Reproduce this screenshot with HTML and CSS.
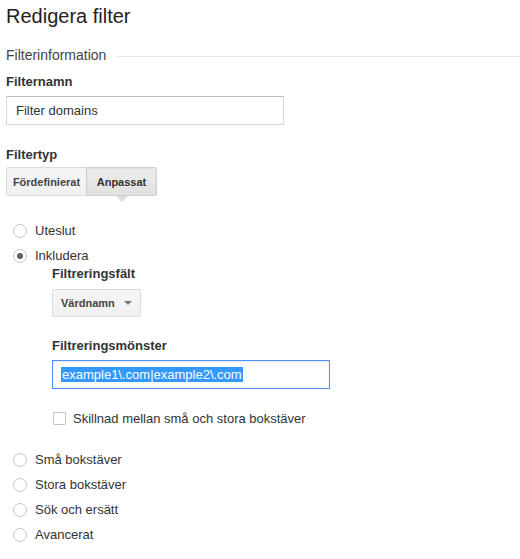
FILE: index.html
```html
<!DOCTYPE html>
<html lang="sv">
<head>
<meta charset="utf-8">
<title>Redigera filter</title>
<link rel="stylesheet" href="styles.css">
</head>
<body>
<div class="page">
  <h1 class="title">Redigera filter</h1>

  <div class="section-head">
    <span class="section-name">Filterinformation</span>
    <span class="rule"></span>
  </div>

  <div class="label label-name">Filternamn</div>
  <div class="textbox name-box">Filter domains</div>

  <div class="label label-type">Filtertyp</div>
  <div class="seg">
    <span class="seg-btn seg-first">Fördefinierat</span>
    <span class="seg-btn seg-on">Anpassat</span>
  </div>

  <div class="radios top-radios">
    <div class="radio-row"><span class="radio"></span><span class="radio-text">Uteslut</span></div>
    <div class="radio-row"><span class="radio checked"></span><span class="radio-text">Inkludera</span></div>
  </div>

  <div class="sub">
    <div class="label label-field">Filtreringsfält</div>
    <div class="dropdown"><span class="dd-text">Värdnamn</span><span class="dd-arrow"></span></div>

    <div class="label label-pattern">Filtreringsmönster</div>
    <div class="textbox pattern-box"><span class="sel">example1\.com|example2\.com</span></div>

    <div class="check-row"><span class="checkbox"></span><span class="check-text">Skillnad mellan små och stora bokstäver</span></div>
  </div>

  <div class="radios bottom-radios">
    <div class="radio-row"><span class="radio"></span><span class="radio-text">Små bokstäver</span></div>
    <div class="radio-row"><span class="radio"></span><span class="radio-text">Stora bokstäver</span></div>
    <div class="radio-row"><span class="radio"></span><span class="radio-text">Sök och ersätt</span></div>
    <div class="radio-row"><span class="radio"></span><span class="radio-text">Avancerat</span></div>
  </div>
</div>
</body>
</html>
```

FILE: styles.css
```css
* { box-sizing: border-box; }

html, body {
  margin: 0;
  padding: 0;
  background: #fff;
}

body {
  font-family: Arial, "Liberation Sans", sans-serif;
  color: #333;
  font-size: 13px;
}

.page {
  padding: 4px 0 0 6px;
}

.title {
  margin: 0;
  font-size: 20px;
  line-height: 24px;
  font-weight: normal;
  color: #222;
}

.section-head {
  display: flex;
  align-items: center;
  margin-top: 18px;
  height: 18px;
}

.section-name {
  font-size: 14px;
  line-height: 18px;
  color: #444;
}

.rule {
  flex: 1;
  height: 1px;
  background: #e5e5e5;
  margin-left: 11px;
  margin-top: 2px;
}

.label {
  font-weight: bold;
  font-size: 13px;
  line-height: 16px;
  color: #333;
}

.label-name { margin-top: 10px; }

.textbox {
  border: 1px solid #d9d9d9;
  border-top-color: #c0c0c0;
  background: #fff;
  font-size: 13px;
  color: #333;
  display: flex;
  align-items: center;
}

.name-box {
  margin-top: 6px;
  width: 278px;
  height: 29px;
  padding-left: 9px;
}

.label-type { margin-top: 22px; }

.seg {
  margin-top: 4px;
  display: flex;
  height: 29px;
}

.seg-btn {
  position: relative;
  display: flex;
  align-items: center;
  justify-content: center;
  height: 29px;
  border: 1px solid #dcdcdc;
  background: linear-gradient(#f5f5f5, #f1f1f1);
  font-size: 11px;
  font-weight: bold;
  color: #444;
}

.seg-first {
  width: 81px;
  border-radius: 2px 0 0 2px;
}

.seg-on {
  width: 71px;
  margin-left: -1px;
  background: linear-gradient(#eeeeee, #e0e0e0);
  border-color: #d0d0d0;
  color: #333;
  border-radius: 0 2px 2px 0;
  box-shadow: inset 0 1px 2px rgba(0,0,0,0.08);
}

.seg-on::after {
  content: "";
  position: absolute;
  left: 50%;
  bottom: -7px;
  margin-left: -6px;
  border-left: 6px solid transparent;
  border-right: 6px solid transparent;
  border-top: 6px solid #dedede;
}

.radios { display: flex; flex-direction: column; }

.top-radios { margin-top: 22px; }

.radio-row {
  display: flex;
  align-items: center;
  height: 25px;
  font-size: 13px;
  color: #333;
}

.radio {
  width: 14px;
  height: 14px;
  border-radius: 50%;
  border: 1px solid #c8c8c8;
  background: #fff;
  margin-left: 7px;
  margin-right: 8px;
  display: flex;
  align-items: center;
  justify-content: center;
  flex: none;
}

.radio.checked::before {
  content: "";
  width: 6px;
  height: 6px;
  border-radius: 50%;
  background: #5e5e5e;
}

.sub {
  padding-left: 46px;
}

.label-field { margin-top: -2px; }

.dropdown {
  margin-top: 7px;
  width: 89px;
  height: 28px;
  border: 1px solid #dcdcdc;
  background: linear-gradient(#f5f5f5, #f1f1f1);
  border-radius: 2px;
  display: flex;
  align-items: center;
  padding-left: 8px;
  font-size: 11px;
  font-weight: bold;
  color: #444;
}

.dd-text { flex: 1; }

.dd-arrow {
  width: 0;
  height: 0;
  border-left: 4px solid transparent;
  border-right: 4px solid transparent;
  border-top: 4px solid #777;
  margin-right: 8px;
}

.label-pattern { margin-top: 21px; }

.pattern-box {
  margin-top: 6px;
  width: 278px;
  height: 29px;
  border: 1px solid #4d90fe;
  padding-left: 8px;
  box-shadow: inset 0 1px 2px rgba(0,0,0,0.1);
}

.sel {
  background: #3399ff;
  color: #fff;
  line-height: 15px;
  padding: 0 1px;
}

.check-row {
  display: flex;
  align-items: center;
  margin-top: 21px;
  height: 16px;
}

.checkbox {
  width: 13px;
  height: 13px;
  border: 1px solid #c6c6c6;
  border-radius: 1px;
  background: #fff;
  margin-left: 1px;
  margin-right: 7px;
  flex: none;
}

.check-text {
  font-size: 13px;
  color: #333;
}

.bottom-radios { margin-top: 21px; }
```
